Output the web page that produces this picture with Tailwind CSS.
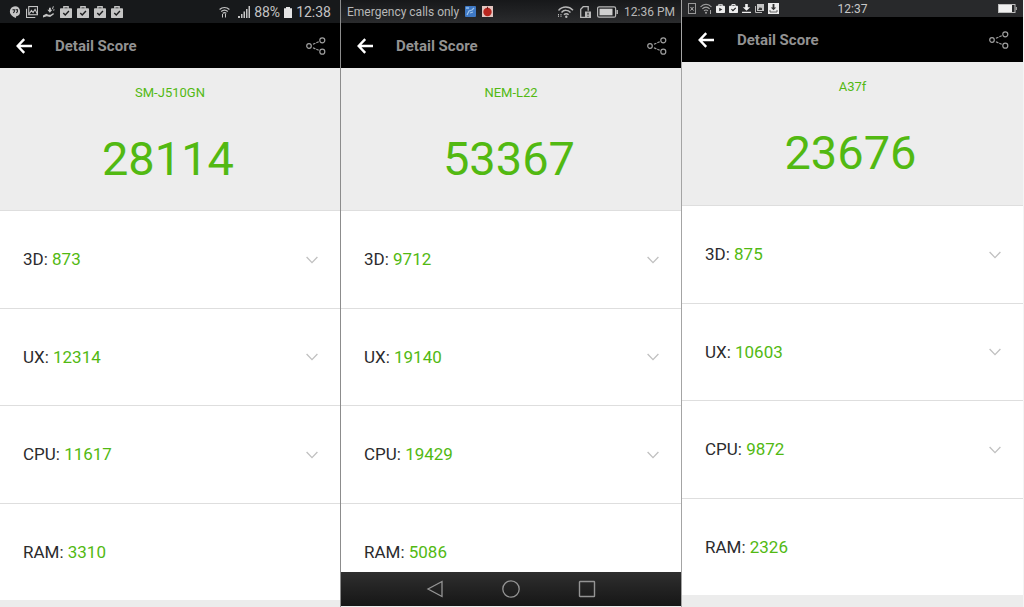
<!DOCTYPE html>
<html lang="en">
<head>
    <meta charset="UTF-8">
    <meta name="viewport" content="width=device-width, initial-scale=1.0">
    <title>Detail Score</title>
    <script src="https://cdn.jsdelivr.net/npm/@tailwindcss/browser@4"></script>
</head>

<body class="bg-[#f4f4f4] font-[Roboto,sans-serif] text-[#2b2b2d]">
    <!-- shared icons -->
    <svg class="hidden">
        <symbol id="back" viewBox="0 0 16 16"><path d="M8.2 1.2 1.7 8l6.5 6.8M2 8h14" fill="none" stroke="#fff" stroke-width="2.4"/></symbol>
        <symbol id="share" viewBox="0 0 20 18">
            <g fill="none" stroke="#a0a0a0" stroke-width="1.2">
                <circle cx="3" cy="9" r="2.3"/><circle cx="16.3" cy="3.3" r="2.5"/><circle cx="16.3" cy="14.7" r="2.5"/>
                <path d="M7 7.2 12.7 4.8M7 10.8l5.7 2.5" stroke-dasharray="2.6 1"/>
            </g>
        </symbol>
        <symbol id="down" viewBox="0 0 12 8"><path d="M.6 1 6 6.6 11.4 1" fill="none" stroke="#c0c0c0" stroke-width="1.3"/></symbol>
        <symbol id="bag" viewBox="0 0 11 11">
            <path d="M3.5 2.5V.7h4v1.8" fill="none" stroke="currentColor" stroke-width="1.2"/>
            <rect y="2" width="11" height="9" rx=".8" fill="currentColor"/>
            <path d="m3 6.4 1.8 1.8L8.2 4.6" fill="none" stroke="#1b1c1e" stroke-width="1.3"/>
        </symbol>
    </svg>

    <main class="grid grid-cols-3 min-h-screen pr-px">
        <!-- SM-J510GN -->
        <section class="flex flex-col border-r border-[#8c8c8c]">
            <div class="h-[23px] bg-[#17191b] text-[#c4c4c4] flex items-center pl-[9px] pr-[9px] pt-px">
                <div class="flex items-center gap-[5px]">
                    <svg class="w-3 h-3" viewBox="0 0 11 11"><path d="M5.5.3a4.700 4.700 0 0 1 .9 9.300V11C3.500 9.800.8 7.800.8 5A4.700 4.700 0 0 1 5.500.3z" fill="currentColor"/><path d="M3.200 3.400h1.700v1.800L4 6.400M6 3.400h1.700v1.800l-.9 1.200" stroke="#17191b" fill="none"/></svg>
                    <svg class="w-3 h-3" viewBox="0 0 11 11"><g fill="none" stroke="currentColor"><path d="M.5 2.500v8h8"/><rect x="2.500" y=".5" width="8" height="7.500"/><path d="m3 7 2-3 1.500 2L8.300 3l2 4"/></g></svg>
                    <svg class="w-3 h-3" viewBox="0 0 11 11"><path d="M0 8.600 3 7l2 1h2l2.500-1.600L10 7.500 6.500 10 3.500 9.400 0 10.500zM5.500 1.500v2H4l2.300 2.700 2.300-2.700H7.200v-2z" fill="currentColor"/><path d="m9.500.3-.8 2.500M10.500 3.500l-1.300.3" stroke="currentColor" stroke-width=".9"/></svg>
                    <svg class="w-3 h-3"><use href="#bag"/></svg>
                    <svg class="w-3 h-3"><use href="#bag"/></svg>
                    <svg class="w-3 h-3"><use href="#bag"/></svg>
                    <svg class="w-3 h-3"><use href="#bag"/></svg>
                </div>
                <div class="flex items-center gap-1 ml-auto text-sm">
                    <svg class="w-[11px] h-3 mr-1" viewBox="0 0 11 12"><g fill="none" stroke="currentColor" stroke-width="1.200"><path d="M.6 3.500C3.400.8 7.600.8 10.400 3.500M2.200 5.500c2-1.800 4.600-1.800 6.600 0M3.700 7.400c1.100-1 2.500-1 3.600 0"/></g><path d="M3.500 8v3.500M6.500 11.500V8" stroke="currentColor"/></svg>
                    <svg class="w-3 h-3" viewBox="0 0 12 12"><path d="M0 12v-2h2v2zM3 12V8h1.500v4zM5.500 12V5.500H7V12zM8 12V3h1.500v9zM10.500 12V0H12v12z" fill="currentColor"/></svg>
                    <span>88%</span>
                    <svg class="w-2 h-[11px]" viewBox="0 0 8 11"><path d="M0 1.200h2V0h4v1.200h2V11H0z" fill="#e4e4e4"/></svg>
                    <span>12:38</span>
                </div>
            </div>
            <header class="h-[45px] bg-black flex items-center pl-4 pr-3.5">
                <button type="button" aria-label="Back"><svg class="w-4 h-4"><use href="#back"/></svg></button>
                <h1 class="ml-[23px] pt-0.5 text-[15px] font-bold text-[#929292]">Detail Score</h1>
                <button type="button" aria-label="Share" class="ml-auto"><svg class="w-5 h-[18px]"><use href="#share"/></svg></button>
            </header>
            <div class="h-[142px] bg-[#ededed] pt-[15px] text-center text-[#52b912]">
                <p class="text-[13px] leading-5">SM-J510GN</p>
                <p class="mt-7 pr-1 text-[47px] leading-14">28114</p>
            </div>
            <div class="flex-1 grid grid-rows-4 bg-white text-[17px]">
                <button type="button" class="flex items-center justify-between pt-px pl-[23px] pr-[22px] border-t border-[#dedede]"><span>3D: <span class="text-[#52b912]">873</span></span><svg class="w-3 h-2"><use href="#down"/></svg></button>
                <button type="button" class="flex items-center justify-between pt-px pl-[23px] pr-[22px] border-t border-[#dedede]"><span>UX: <span class="text-[#52b912]">12314</span></span><svg class="w-3 h-2"><use href="#down"/></svg></button>
                <button type="button" class="flex items-center justify-between pt-px pl-[23px] pr-[22px] border-t border-[#dedede]"><span>CPU: <span class="text-[#52b912]">11617</span></span><svg class="w-3 h-2"><use href="#down"/></svg></button>
                <div class="flex items-center pt-px pl-[23px] border-t border-[#dedede]"><span>RAM: <span class="text-[#52b912]">3310</span></span></div>
            </div>
            <div class="h-[7px] bg-[#ececec]"></div>
        </section>

        <!-- NEM-L22 -->
        <section class="relative flex flex-col border-r border-[#a4a4a4]">
            <div class="h-[23px] bg-linear-to-b from-[#17181a] to-[#2a2b2d] text-[#b8b8b8] flex items-center pl-1.5 pr-1.5 text-xs">
                <span>Emergency calls only</span>
                <svg class="w-[11px] h-[11px] ml-1.5" viewBox="0 0 11 11"><rect width="11" height="11" rx="1" fill="#3e78c4"/><path d="M2 9 4 5l3-1 2-2M5 7l3-1" stroke="#9fc4ec" stroke-width="1.200" fill="none"/><path d="M1 1h3v2H1z" fill="#7eaee2"/></svg>
                <svg class="w-[11px] h-[11px] ml-1.5" viewBox="0 0 11 11"><rect width="11" height="11" fill="#e2c4bf"/><circle cx="5.500" cy="6" r="4.200" fill="#b8261f"/><path d="M5.500 3V.8" stroke="#6c2019"/></svg>
                <div class="flex items-center gap-1.5 ml-auto">
                    <svg class="w-[17px] h-3" viewBox="0 0 17 12"><g fill="none" stroke="currentColor" stroke-width="1.400"><path d="M1.500 4.500C5.500-.2 12 0 16 4.200M4.500 6.500c2.500-3 6.500-2.800 9 0M7 8.800c1.300-1.500 3.300-1.500 4.600 0"/></g><circle cx="9.300" cy="10.700" r="1.200" fill="currentColor"/><path d="M1.500 8v3M4 8v3" stroke="currentColor" stroke-dasharray="1.500 .6"/></svg>
                    <svg class="w-[11px] h-3" viewBox="0 0 11 12"><path d="M5 11.400H.7V3.200L3.200.7h5v4" fill="none" stroke="currentColor" stroke-width="1.300"/><rect x="5" y="5.500" width="6" height="6.500" fill="currentColor"/><path d="M8 6.800v2M8 9.800v1" stroke="#222" stroke-width="1.200"/></svg>
                    <svg class="w-[21px] h-3" viewBox="0 0 21 12"><rect x=".6" y=".8" width="18" height="10.400" rx="1.500" fill="none" stroke="currentColor" stroke-width="1.200"/><path d="M2.500 2.700h13v6.600h-13z" fill="#cfcfcf"/><path d="M20.200 4v4" stroke="currentColor" stroke-width="1.500"/></svg>
                    <span>12:36 PM</span>
                </div>
            </div>
            <header class="h-[45px] bg-black flex items-center pl-4 pr-3.5">
                <button type="button" aria-label="Back"><svg class="w-4 h-4"><use href="#back"/></svg></button>
                <h1 class="ml-[23px] pt-0.5 text-[15px] font-bold text-[#929292]">Detail Score</h1>
                <button type="button" aria-label="Share" class="ml-auto"><svg class="w-5 h-[18px]"><use href="#share"/></svg></button>
            </header>
            <div class="h-[142px] bg-[#ededed] pt-[15px] text-center text-[#52b912]">
                <p class="text-[13px] leading-5">NEM-L22</p>
                <p class="mt-7 pr-1 text-[47px] leading-14">53367</p>
            </div>
            <div class="flex-1 grid grid-rows-4 bg-white text-[17px]">
                <button type="button" class="flex items-center justify-between pt-px pl-[23px] pr-[22px] border-t border-[#dedede]"><span>3D: <span class="text-[#52b912]">9712</span></span><svg class="w-3 h-2"><use href="#down"/></svg></button>
                <button type="button" class="flex items-center justify-between pt-px pl-[23px] pr-[22px] border-t border-[#dedede]"><span>UX: <span class="text-[#52b912]">19140</span></span><svg class="w-3 h-2"><use href="#down"/></svg></button>
                <button type="button" class="flex items-center justify-between pt-px pl-[23px] pr-[22px] border-t border-[#dedede]"><span>CPU: <span class="text-[#52b912]">19429</span></span><svg class="w-3 h-2"><use href="#down"/></svg></button>
                <div class="flex items-center pt-px pl-[23px] border-t border-[#dedede]"><span>RAM: <span class="text-[#52b912]">5086</span></span></div>
            </div>
            <div class="h-[7px] bg-[#ececec]"></div>
            <!-- on-screen keys cover the end of the list -->
            <nav class="absolute inset-x-0 bottom-px h-[34px] bg-linear-to-b from-[#2f2f2f] to-[#161616] flex items-center justify-center gap-[58px]">
                <button type="button" aria-label="Back"><svg class="w-[18px] h-[18px]" viewBox="0 0 18 18"><path d="M16 1.500v15L2 9z" fill="none" stroke="#949494" stroke-width="1.300"/></svg></button>
                <button type="button" aria-label="Home"><svg class="w-[18px] h-[18px]" viewBox="0 0 18 18"><circle cx="9" cy="9" r="8.200" fill="none" stroke="#949494" stroke-width="1.300"/></svg></button>
                <button type="button" aria-label="Recent apps"><svg class="w-[18px] h-[18px]" viewBox="0 0 18 18"><rect x="1.500" y="1.500" width="15" height="15" rx=".5" fill="none" stroke="#949494" stroke-width="1.400"/></svg></button>
            </nav>
        </section>

        <!-- A37f -->
        <section class="flex flex-col">
            <div class="h-[17px] bg-[#28292b] text-[#c8c8c8] grid grid-cols-[1fr_auto_1fr] items-center pl-1.5 pr-1.5 text-xs">
                <div class="flex items-center gap-1">
                    <svg class="w-2 h-[11px]" viewBox="0 0 8 11"><rect x=".5" y=".5" width="7" height="10" fill="none" stroke="#999"/><path d="m2.500 4 3 3.500m0-3.500-3 3.500" stroke="#b4b4b4"/></svg>
                    <svg class="w-3 h-[11px]" viewBox="0 0 12 11"><g fill="none" stroke="#a4a4a4" stroke-width="1.100"><path d="M.5 4C3.600.3 8.400.3 11.500 4M2.300 6c2.200-2.500 5.200-2.500 7.400 0M4 8c1.200-1.300 2.800-1.300 4 0"/></g><circle cx="6" cy="9.700" r="1" fill="#a4a4a4"/><path d="M10.500 7v4" stroke="#a4a4a4"/></svg>
                    <svg class="w-[9px] h-[9px] text-[#eee]" viewBox="0 0 11 11"><path d="M3.500 2.500V.9h4v1.600" fill="none" stroke="currentColor" stroke-width="1.300"/><rect y="2.200" width="11" height="8.800" rx="1" fill="currentColor"/><path d="M4 4.500v4.400l3.700-2.200z" fill="#28292b"/></svg>
                    <svg class="w-[9px] h-[9px] text-[#eee]"><use href="#bag"/></svg>
                    <svg class="w-[9px] h-[9px]" viewBox="0 0 9 9"><path d="M3.200 0h2.600v3.200h2.400L4.500 6.800.8 3.200h2.400zM0 7.800h9V9H0z" fill="#f0f0f0"/></svg>
                    <svg class="w-[9px] h-[9px]" viewBox="0 0 9 9"><path d="M.5 2v6.500h6.500" fill="none" stroke="#bbb"/><rect x="2" width="7" height="7" fill="#c4c4c4"/><path d="m3 6 2-3 1 1.500L7 3.500V6z" fill="#333"/></svg>
                    <svg class="w-[11px] h-[11px]" viewBox="0 0 11 11"><rect width="11" height="11" fill="#ececec"/><path d="M4.600 1h1.800v3.500h1.800L5.500 7.200 2.800 4.500h1.800z" fill="#333"/><path d="M2 7v2h7V7" fill="none" stroke="#555" stroke-width=".9"/></svg>
                </div>
                <span>12:37</span>
                <svg class="w-[19px] h-[9px] justify-self-end" viewBox="0 0 19 9"><rect x=".5" y=".5" width="16.500" height="8" fill="none" stroke="#bdbdbd"/><path d="M1 1h13v7H1z" fill="#f0f0f0"/><path d="M18.300 3v3" stroke="#bdbdbd"/></svg>
            </div>
            <header class="h-[45px] bg-black flex items-center pl-4 pr-3.5">
                <button type="button" aria-label="Back"><svg class="w-4 h-4"><use href="#back"/></svg></button>
                <h1 class="ml-[23px] pt-0.5 text-[15px] font-bold text-[#929292]">Detail Score</h1>
                <button type="button" aria-label="Share" class="ml-auto"><svg class="w-5 h-[18px]"><use href="#share"/></svg></button>
            </header>
            <div class="h-[143px] bg-[#ededed] pt-[15px] text-center text-[#52b912]">
                <p class="text-[13px] leading-5">A37f</p>
                <p class="mt-7 pr-1 text-[47px] leading-14">23676</p>
            </div>
            <div class="flex-1 grid grid-rows-4 bg-white text-[17px]">
                <button type="button" class="flex items-center justify-between pt-px pl-[23px] pr-[22px] border-t border-[#dedede]"><span>3D: <span class="text-[#52b912]">875</span></span><svg class="w-3 h-2"><use href="#down"/></svg></button>
                <button type="button" class="flex items-center justify-between pt-px pl-[23px] pr-[22px] border-t border-[#dedede]"><span>UX: <span class="text-[#52b912]">10603</span></span><svg class="w-3 h-2"><use href="#down"/></svg></button>
                <button type="button" class="flex items-center justify-between pt-px pl-[23px] pr-[22px] border-t border-[#dedede]"><span>CPU: <span class="text-[#52b912]">9872</span></span><svg class="w-3 h-2"><use href="#down"/></svg></button>
                <div class="flex items-center pt-px pl-[23px] border-t border-[#dedede]"><span>RAM: <span class="text-[#52b912]">2326</span></span></div>
            </div>
            <div class="h-3 bg-[#ececec]"></div>
        </section>
    </main>
</body>

</html>
